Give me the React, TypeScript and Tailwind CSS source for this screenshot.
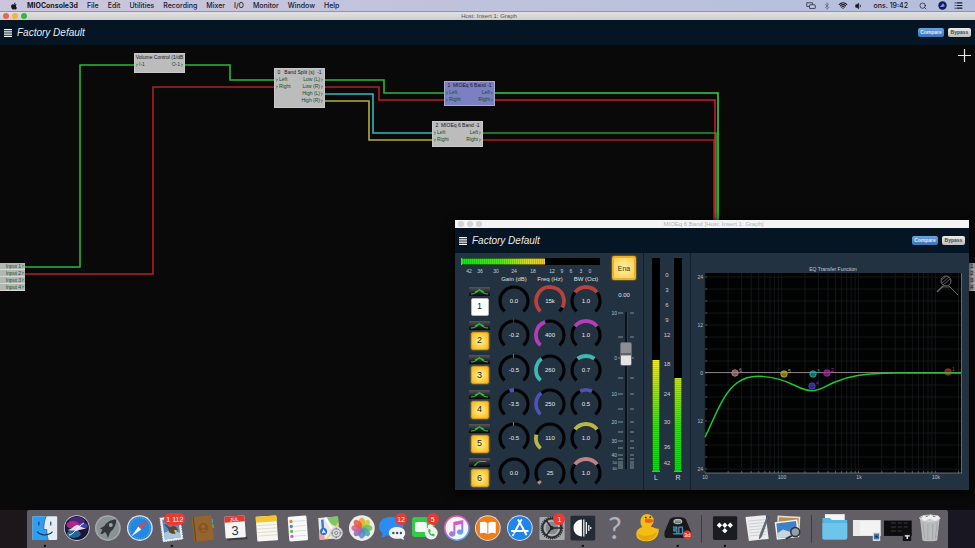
/**
 * @module App
 *
 * MIO Console desktop — insert graph window with an open 6 band EQ editor,
 * framed by the system menu bar and the dock.
 */

import { useState } from "react";
import type { ReactNode } from "react";
import { FaApple } from "react-icons/fa";
import { Bluetooth, ChevronRight, List, Search, Volume1, Wifi } from "lucide-react";

const MENUS = ["File", "Edit", "Utilities", "Recording", "Mixer", "I/O", "Monitor", "Window", "Help"];

/* ------------------------------------------------------------------ */
/* Menu bar                                                            */
/* ------------------------------------------------------------------ */

function MenuBar() {
  return (
    <header className="flex h-3 items-center justify-between border-b border-[#8f93a8] bg-linear-to-r from-[#cbc6dc] to-[#b3bedd] pr-3 pl-[10px] font-[Inter,sans-serif] text-[7px] leading-none font-medium text-[#17171f]">
      <nav className="flex items-center gap-[9px]">
        <button aria-label="Apple menu">
          <FaApple className="h-2 w-2" />
        </button>
        <button className="font-bold">MIOConsole3d</button>
        {MENUS.map((m) => (
          <button key={m}>{m}</button>
        ))}
      </nav>
      <div className="flex items-center gap-[7px]">
        <svg viewBox="0 0 20 14" className="h-[7px] w-[10px]" fill="none" stroke="#2b2d3c" strokeWidth="1.6">
          <path d="M6 9H1.5V1.5H13V5" />
          <rect x="7" y="5.5" width="11.5" height="7.5" rx="1" />
        </svg>
        <Bluetooth className="h-2 w-2 text-[#5a5f78]" />
        <Wifi className="h-[9px] w-[10px]" strokeWidth={3} />
        <Volume1 className="h-2 w-2 fill-current" />
        <span className="pr-1 pl-1">ons. 19:42</span>
        <button aria-label="Search" className="pr-1">
          <Search className="h-2 w-2" />
        </button>
        <button aria-label="Siri">
          <svg viewBox="0 0 16 16" className="h-[9px] w-[9px]">
            <circle cx="8" cy="8" r="7.5" fill="#151a5c" />
            <path d="M3 10c3-1 4-5 6-6 2 1 1 4 4 5-3 1-6 3-10 1z" fill="#7d8cf0" />
          </svg>
        </button>
        <button aria-label="Notifications">
          <List className="h-[9px] w-[9px]" strokeWidth={3} />
        </button>
      </div>
    </header>
  );
}

/* ------------------------------------------------------------------ */
/* Window chrome                                                       */
/* ------------------------------------------------------------------ */

function TitleBar({ title, active }: { title: string; active?: boolean }) {
  return (
    <div
      className={
        active
          ? "flex h-2 items-center bg-linear-to-b from-[#e2e1e2] to-[#cfcecf] text-[#555]"
          : "flex h-2 items-center bg-[#f4f4f4] text-[#b5b5b5]"
      }
    >
      <div className="flex flex-1 gap-[3px] pl-[3px]">
        <button aria-label="Close" className={active ? "h-1.5 w-1.5 rounded-full bg-[#f0605a]" : "h-1.5 w-1.5 rounded-full bg-[#d3d3d3]"} />
        <button aria-label="Minimize" className={active ? "h-1.5 w-1.5 rounded-full bg-[#f0b53c]" : "h-1.5 w-1.5 rounded-full bg-[#d3d3d3]"} />
        <button aria-label="Zoom" className={active ? "h-1.5 w-1.5 rounded-full bg-[#38b54a]" : "h-1.5 w-1.5 rounded-full bg-[#d3d3d3]"} />
      </div>
      <span className="text-[6px] leading-none">{title}</span>
      <div className="flex-1" />
    </div>
  );
}

function PresetBar() {
  return (
    <div className="flex h-[25px] items-center justify-between bg-[#051523] pr-1 pl-1">
      <div className="flex items-center gap-[5px]">
        <button aria-label="Preset menu">
          <svg viewBox="0 0 8 8" className="h-2 w-2" stroke="#fff" strokeWidth="1.200">
            <path d="M0 0.700H8M0 2.900H8M0 5.100H8M0 7.300H8" />
          </svg>
        </button>
        <span className="text-[10px] leading-none text-[#e8ecef] italic">Factory Default</span>
      </div>
      <div className="flex gap-1 text-[5px] leading-none font-bold">
        <button className="h-[9px] w-[26px] rounded-xs bg-linear-to-b from-[#6aa5de] to-[#3873b8] text-[#dcebfa]">Compare</button>
        <button className="h-[9px] w-[23px] rounded-xs bg-linear-to-b from-[#ececec] to-[#bdbdbd] text-[#444]">Bypass</button>
      </div>
    </div>
  );
}

/* ------------------------------------------------------------------ */
/* Graph nodes and wires                                               */
/* ------------------------------------------------------------------ */

const WIRES: { color: string; d: string }[] = [
  { color: "#2eb53a", d: "M25 222H80V20H134" },
  { color: "#2eb53a", d: "M185 20H230V35H274" },
  { color: "#b31f24", d: "M25 229H153V42H274" },
  { color: "#35b8bf", d: "M325 49H373V88H432" },
  { color: "#b8ac3c", d: "M325 56H369V95H432" },
  { color: "#b31f24", d: "M325 42H379V55H444" },
  { color: "#2eb53a", d: "M325 35H384V48H444" },
  { color: "#a32020", d: "M482 95H714V229H969" },
  { color: "#c91f22", d: "M495 55H715V229H969" },
  { color: "#2a962c", d: "M482 88H716V222H969" },
  { color: "#35d040", d: "M495 48H718V222H969" },
];

type Port = { left?: string; right?: string };

function GraphNode({ title, ports, className }: { title: string; ports: Port[]; className: string }) {
  return (
    <div className={`absolute w-[51px] overflow-hidden border border-[#d4d4d4]/50 text-[5px] ${className}`}>
      <div className="flex h-[7px] items-center justify-center leading-none whitespace-pre text-[#16161c]">{title}</div>
      {ports.map((p, i) => (
        <div key={i} className="flex h-[7px] items-center justify-between leading-none text-[#14501e]">
          <span className="flex items-center">
            {p.left && <ChevronRight className="h-1 w-1" strokeWidth={4} />}
            {p.left}
          </span>
          <span className="flex items-center">
            {p.right}
            {p.right && <ChevronRight className="h-1 w-1" strokeWidth={4} />}
          </span>
        </div>
      ))}
    </div>
  );
}

const STEREO: Port[] = [
  { left: "Left", right: "Left" },
  { left: "Right", right: "Right" },
];

/* ------------------------------------------------------------------ */
/* EQ controls                                                         */
/* ------------------------------------------------------------------ */

type Band = {
  id: number;
  on: boolean;
  shape: "bell" | "cut";
  color: string;
  gain: string;
  gainArc?: [number, number];
  freq: string;
  freqEnd: number;
  bw: string;
  bwHalf: number;
};

const BANDS: Band[] = [
  { id: 1, on: false, shape: "bell", color: "#b8423f", gain: "0.0", freq: "15k", freqEnd: 118, bw: "1.0", bwHalf: 52 },
  { id: 2, on: true, shape: "bell", color: "#b23fb8", gain: "-0.2", gainArc: [-2, 0], freq: "400", freqEnd: -20, bw: "1.0", bwHalf: 52 },
  { id: 3, on: true, shape: "bell", color: "#3fb8b4", gain: "-0.5", gainArc: [-4, 0], freq: "260", freqEnd: -36, bw: "0.7", bwHalf: 37 },
  { id: 4, on: true, shape: "bell", color: "#5052b8", gain: "-3.5", gainArc: [-18, 0], freq: "250", freqEnd: -38, bw: "0.5", bwHalf: 25 },
  { id: 5, on: true, shape: "bell", color: "#b8b84a", gain: "-0.5", gainArc: [-4, 0], freq: "110", freqEnd: -76, bw: "1.0", bwHalf: 52 },
  { id: 6, on: true, shape: "cut", color: "#bf8286", gain: "0.0", freq: "25", freqEnd: -125, bw: "1.0", bwHalf: 52 },
];

function arc(from: number, to: number) {
  const r = 14;
  const pt = (deg: number) => {
    const a = (deg * Math.PI) / 180;
    return `${(16 + r * Math.sin(a)).toFixed(2)} ${(16 - r * Math.cos(a)).toFixed(2)}`;
  };
  return `M${pt(from)}A${r} ${r} 0 ${to - from > 180 ? 1 : 0} 1 ${pt(to)}`;
}

function Knob({ label, value, range, color }: { label: string; value: string; range?: [number, number]; color: string }) {
  return (
    <div className="relative flex h-8 w-8 items-center justify-center justify-self-center">
      <svg viewBox="0 0 32 32" className="absolute inset-0" fill="none" strokeWidth="3.200">
        <path d={arc(-138, 138)} stroke="#020203" />
        {range && <path d={arc(range[0], range[1])} stroke={color} strokeWidth="3.800" />}
      </svg>
      <span className="text-[6px] leading-none text-[#e6eaed]">{value}</span>
      <input type="range" aria-label={label} min={-135} max={135} defaultValue={range ? range[1] : 0} className="absolute inset-0 h-8 w-8 opacity-0" />
    </div>
  );
}

function BandRow({ band }: { band: Band }) {
  const [on, setOn] = useState(band.on);
  return (
    <div className="grid flex-1 grid-cols-[33px_36px_36px_36px] items-center">
      <div className="flex flex-col items-center gap-0.5">
        <button aria-label={`Band ${band.id} filter type`} className="bg-linear-to-b from-[#55585b] to-[#08090a]">
          <svg viewBox="0 0 21 9" className="h-[9px] w-[21px]" fill="none" stroke="#27c23c" strokeWidth="1.200">
            {band.shape === "bell" ? (
              <path d="M2 7C6 7 8.500 5 10.500 2.500C12.500 5 15 7 19 7M6 5L10.500 3L15 5" />
            ) : (
              <path d="M5 7.500C8 7 7 4 11 3.500H17" />
            )}
          </svg>
        </button>
        <button
          onClick={() => setOn(!on)}
          aria-pressed={on}
          className={
            on
              ? "flex h-[18px] w-[18px] items-center justify-center rounded-xs border border-[#dc9c18] bg-radial from-[#fff0a0] via-[#fdd64e] to-[#f3b31c] text-[9px] leading-none text-[#26241c] shadow-[0_0_2px_#e8a818]"
              : "flex h-[18px] w-[18px] items-center justify-center rounded-xs border border-[#b5b8ba] bg-white text-[9px] leading-none text-[#26241c]"
          }
        >
          {band.id}
        </button>
      </div>
      <Knob label={`Band ${band.id} gain`} value={band.gain} range={band.gainArc} color={band.id === 4 ? band.color : "#6f7a72"} />
      <Knob label={`Band ${band.id} frequency`} value={band.freq} range={[-138, band.freqEnd]} color={band.color} />
      <Knob label={`Band ${band.id} bandwidth`} value={band.bw} range={[-band.bwHalf, band.bwHalf]} color={band.color} />
    </div>
  );
}

const INPUT_SCALE: [string, number][] = [
  ["42", 8], ["36", 19], ["30", 35], ["24", 53], ["18", 72], ["12", 91], ["9", 101], ["6", 110], ["3", 120], ["0", 129],
];

function InputMeter() {
  return (
    <svg viewBox="0 0 140 16" className="ml-1.5 h-4 w-[140px]">
      <defs>
        <linearGradient id="inputLevel">
          <stop offset="0" stopColor="#17e01c" />
          <stop offset="0.450" stopColor="#4be61a" />
          <stop offset="0.800" stopColor="#d5dc22" />
          <stop offset="1" stopColor="#f2c828" />
        </linearGradient>
        <pattern id="inputSegments" width="2" height="7" patternUnits="userSpaceOnUse">
          <rect width="0.500" height="7" fill="#000" opacity="0.250" />
        </pattern>
      </defs>
      <rect width="139" height="7" fill="#000" />
      <rect x="1" y="0.500" width="83" height="6" fill="url(#inputLevel)" />
      <rect x="1" y="0.500" width="83" height="6" fill="url(#inputSegments)" />
      <path d="M0.500 0V7" stroke="#c9a227" />
      <g fill="#c9d1d6" fontSize="5" textAnchor="middle">
        {INPUT_SCALE.map(([label, x]) => (
          <text key={label} x={x} y="15">{label}</text>
        ))}
      </g>
    </svg>
  );
}

const FADER_LABELS: [string, number][] = [
  ["10", 5], ["0", 50], ["10", 86], ["20", 114], ["30", 133], ["40", 147],
];
const FADER_LOW_LABELS: [string, number][] = [["50", 154], ["60", 160]];
const FADER_TICKS = [5, 29, 50, 70, 86, 101, 114, 124, 133, 140, 147, 151, 154, 156, 158, 160];

function Fader() {
  const [value, setValue] = useState(72);
  return (
    <div className="relative h-[164px] w-[38px]">
      <svg viewBox="0 0 38 164" className="absolute inset-0" fill="none">
        <rect x="20" y="4" width="2" height="157" fill="#0b1218" />
        <path d="M22.500 4V161" stroke="#3b4c59" strokeWidth="0.600" />
        {FADER_TICKS.map((y) => (
          <path key={y} d={`M13 ${y}h5M25 ${y}h4`} stroke="#9ba7af" strokeWidth="0.800" />
        ))}
        <g fill="#b7c1c8" fontSize="5" textAnchor="end">
          {FADER_LABELS.map(([label, y]) => (
            <text key={y} x="12" y={y + 2}>{label}</text>
          ))}
        </g>
        <g fill="#b7c1c8" fontSize="4" textAnchor="end">
          {FADER_LOW_LABELS.map(([label, y]) => (
            <text key={y} x="12" y={y + 2}>{label}</text>
          ))}
        </g>
      </svg>
      <div
        className="absolute left-[15px] h-6 w-3 rounded-xs border border-[#63666a] bg-linear-to-b from-[#8d8f92] from-45% via-[#3e4043] via-50% to-[#e4e5e6] to-60%"
        style={{ top: `${((100 - value) / 100) * 122}px` }}
      />
      <input
        type="range"
        aria-label="Output level"
        value={value}
        onChange={(e) => setValue(Number(e.target.value))}
        className="absolute inset-y-0 left-[13px] h-full w-4 opacity-0 [direction:rtl] [writing-mode:vertical-lr]"
      />
    </div>
  );
}

const OUTPUT_SCALE: [string, number][] = [
  ["0", 22], ["3", 37], ["6", 52], ["9", 67], ["12", 82], ["18", 111], ["24", 141], ["30", 169], ["36", 194], ["42", 210],
];

function OutputMeters() {
  return (
    <svg viewBox="0 0 46 237" className="w-[46px]">
      <defs>
        <linearGradient id="outputLevel" gradientUnits="userSpaceOnUse" x1="0" y1="107" x2="0" y2="218">
          <stop offset="0" stopColor="#f6ee22" />
          <stop offset="0.250" stopColor="#a8e022" />
          <stop offset="0.600" stopColor="#35dc1c" />
          <stop offset="1" stopColor="#0cd416" />
        </linearGradient>
        <pattern id="outputSegments" width="7" height="2" patternUnits="userSpaceOnUse">
          <rect width="7" height="0.500" fill="#000" opacity="0.250" />
        </pattern>
      </defs>
      {[{ x: 8, top: 107, name: "L" }, { x: 30, top: 125, name: "R" }].map((m) => (
        <g key={m.name}>
          <rect x={m.x} y="5" width="8" height="214" fill="#000" />
          <rect x={m.x + 0.5} y={m.top} width="7" height={218 - m.top} fill="url(#outputLevel)" />
          <rect x={m.x + 0.5} y={m.top} width="7" height={218 - m.top} fill="url(#outputSegments)" />
          <path d={`M${m.x} 218.500h8`} stroke="#c48a20" />
          <text x={m.x + 4} y="227" fontSize="7" fill="#d7dde1" textAnchor="middle">{m.name}</text>
        </g>
      ))}
      <g fill="#c6cfd5" fontSize="6" textAnchor="middle">
        {OUTPUT_SCALE.map(([label, y]) => (
          <text key={label} x="23" y={y + 2}>{label}</text>
        ))}
      </g>
    </svg>
  );
}

/* ------------------------------------------------------------------ */
/* Transfer function plot                                              */
/* ------------------------------------------------------------------ */

const HANDLES = [
  { id: 6, x: 44, y: 120, color: "#bf8286" },
  { id: 5, x: 93, y: 121, color: "#b8b022" },
  { id: 3, x: 122, y: 121, color: "#23a8a8" },
  { id: 2, x: 136, y: 120, color: "#b022b0" },
  { id: 4, x: 121, y: 133, color: "#4545c4" },
  { id: 1, x: 257, y: 119, color: "#b8321f" },
];

const freqToX = (f: number) => 14 + 76.8 * Math.log10(f / 10);
const GRID_FREQS = [10, 100, 1000, 10000].flatMap((d) => [1, 2, 3, 4, 5, 6, 7, 8, 9].map((n) => n * d)).filter((f) => f <= 20000);
const GRID_LINES = Array.from({ length: 17 }, (_, i) => 24 + i * 12);

function TransferPlot() {
  return (
    <svg viewBox="0 0 278 237" className="w-[278px]" fill="none">
      <text x="142" y="18" fontSize="5" fill="#c3ccd2" textAnchor="middle">EQ Transfer Function</text>
      <rect x="14" y="20" width="257" height="200" fill="#010202" />
      {GRID_LINES.map((y) => (
        <path key={y} d={`M15 ${y}H270`} stroke="#1b1f21" strokeWidth="0.700" />
      ))}
      {GRID_FREQS.map((f) => (
        <path key={f} d={`M${freqToX(f).toFixed(1)} 20V220`} stroke="#1b1f21" strokeWidth="0.700" />
      ))}
      {GRID_FREQS.map((f) => (
        <path key={f} d={`M${freqToX(f).toFixed(1)} 220v-2`} stroke="#76838b" strokeWidth="0.600" />
      ))}
      {GRID_LINES.map((y) => (
        <path key={y} d={`M14 ${y}h2`} stroke="#76838b" strokeWidth="0.600" />
      ))}
      <path d="M14 220H271M270.500 20V220" stroke="#7c878d" strokeWidth="0.800" />
      <path d="M14 119.500H270" stroke="#a39a9a" strokeWidth="0.800" />
      {HANDLES.map((h) => (
        <g key={h.id}>
          <circle cx={h.x} cy={h.y} r="3.200" fill={h.color} fillOpacity="0.650" stroke={h.color} strokeWidth="0.900" />
          <text x={h.x + 4} y={h.y - 1} fontSize="5" fill={h.color}>{h.id}</text>
        </g>
      ))}
      <path
        d="M14 184.300C20 172 27 154 34 143.500C41 132.500 50 123.500 67 123.300C84 123.300 96 128.500 104 132.500C111 136 116 137.700 121 137.700C130 137.700 134 133 144 129C158 123 170 120.500 206 120H270"
        stroke="#1fc92c"
        strokeWidth="1.400"
      />
      <g stroke="#6c6f70" strokeWidth="1">
        <circle cx="255" cy="28" r="5" />
        <path d="M251 30L258 24M252 32L259 26M250.500 27L255 23.500" strokeWidth="0.800" />
        <path d="M252 33L246 39" strokeWidth="1.500" />
        <path d="M258 33L267 42" />
        <path d="M251 34H259" strokeWidth="0.800" />
      </g>
      <g fill="#b7c1c8" fontSize="5">
        {["24", "12", "0", "12", "24"].map((t, i) => (
          <text key={i} x="12" y={26 + i * 48} textAnchor="end">{t}</text>
        ))}
        {["10", "100", "1k", "10k"].map((t, i) => (
          <text key={t} x={14 + i * 77} y="226" textAnchor="middle">{t}</text>
        ))}
      </g>
    </svg>
  );
}

function EqWindow() {
  const [enabled, setEnabled] = useState(true);
  return (
    <section className="absolute top-[175px] left-[455px] shadow-[0_2px_10px_#000]">
      <TitleBar title="MIOEq 6 Band [Host: Insert 1: Graph]" />
      <PresetBar />
      <div className="flex bg-[#223240]">
        <div className="flex flex-col pt-[5px] pr-px">
          <InputMeter />
          <div className="grid grid-cols-[33px_36px_36px_36px] pl-2 text-center text-[6px] leading-[10px] whitespace-nowrap text-[#dbe1e5]">
            <span />
            <span>Gain (dB)</span>
            <span>Freq (Hz)</span>
            <span>BW (Oct)</span>
          </div>
          <div className="flex flex-1 flex-col pl-2">
            {BANDS.map((b) => (
              <BandRow key={b.id} band={b} />
            ))}
          </div>
        </div>
        <div className="flex w-[38px] flex-col items-center pt-[3px]">
          <button
            onClick={() => setEnabled(!enabled)}
            aria-pressed={enabled}
            className={
              enabled
                ? "h-6 w-6 rounded-xs border-2 border-[#eeb02a] bg-radial from-[#fff0a0] to-[#f9cf4a] text-[7px] leading-none text-[#3b3413] shadow-[0_0_2px_#e8a818]"
                : "h-6 w-6 rounded-xs border-2 border-[#b5b8ba] bg-white text-[7px] leading-none text-[#3b3413]"
            }
          >
            Ena
          </button>
          <output className="pt-3 pb-2.5 text-[6px] leading-none text-[#dbe1e5]">0.00</output>
          <Fader />
        </div>
        <div className="border-x border-[#131f2a]">
          <OutputMeters />
        </div>
        <TransferPlot />
      </div>
    </section>
  );
}

function Canvas() {
  return (
    <main className="relative min-h-[464px] flex-1 overflow-hidden bg-[#090909]">
      <svg className="absolute inset-0 h-full w-full" fill="none" strokeWidth="1.600">
        {WIRES.map((w) => (
          <path key={w.d} d={w.d} stroke={w.color} />
        ))}
      </svg>

      <button aria-label="Add node" className="absolute top-1 right-1">
        <svg viewBox="0 0 13 13" className="h-[13px] w-[13px]" stroke="#e8e8e8" strokeWidth="1.200">
          <path d="M0 6.500H13M6.500 0V13" />
        </svg>
      </button>

      <GraphNode title="Volume Control (1/dB" ports={[{ left: "I-1", right: "O-1" }]} className="top-2 left-[134px] h-5 bg-[#bcbcbc]" />
      <GraphNode
        title="0   Band Split (s)  -1"
        ports={[{ left: "Left", right: "Low (L)" }, { left: "Right", right: "Low (R)" }, { right: "High (L)" }, { right: "High (R)" }]}
        className="top-[23px] left-[274px] h-10 bg-[#bcbcbc]"
      />
      <GraphNode title="1  MIOEq 6 Band -1" ports={STEREO} className="top-9 left-[444px] h-[25px] bg-[#7b80c2]" />
      <GraphNode title="2  MIOEq 6 Band -1" ports={STEREO} className="top-[76px] left-[432px] h-[26px] bg-[#bcbcbc]" />

      <ul className="absolute top-[218px] left-0 w-[25px] text-[5px] text-[#14501e]">
        {[1, 2, 3, 4].map((n) => (
          <li key={n} className="flex h-[7px] items-center justify-end border-b border-[#d8d8d8] bg-[#b4b8b4] leading-none">
            Input {n}
            <ChevronRight className="h-1 w-1" strokeWidth={4} />
          </li>
        ))}
      </ul>
      <ul className="absolute top-[218px] right-0 w-1.5 text-center text-[5px] text-[#222]">
        {[1, 2, 3, 4].map((n) => (
          <li key={n} className="h-[7px] border-b border-[#d8d8d8] bg-[#b4b4b4] leading-[6px]">{n}</li>
        ))}
      </ul>

      <EqWindow />
    </main>
  );
}

/* ------------------------------------------------------------------ */
/* Dock                                                                */
/* ------------------------------------------------------------------ */

type DockItem = { name: string; art: ReactNode; badge?: string; running?: boolean };

const APPS: DockItem[] = [
  {
    name: "Finder",
    running: true,
    art: (
      <>
        <rect x="3.500" y="6" width="25" height="24" rx="1" fill="#e3ebf3" />
        <path d="M4.500 6H17.500C15.500 11 15 15 15 19.500H18C18 24 18.500 27 19.500 30H4.500Q3.500 30 3.500 29V7Q3.500 6 4.500 6Z" fill="#2f9df0" />
        <path d="M10 12v3M22 12v3M8.500 22C12 26 20 26 23.500 22" fill="none" stroke="#13324f" strokeWidth="1.100" strokeLinecap="round" />
        <path d="M17.500 6C15.500 11 15 15 15 19.500H18C18 24 18.500 27 19.500 30" fill="none" stroke="#13324f" strokeWidth="0.500" />
      </>
    ),
  },
  {
    name: "Siri",
    art: (
      <>
        <circle cx="16" cy="18" r="13" fill="#cfd0d8" />
        <circle cx="16" cy="18" r="12.200" fill="#1c1535" />
        <ellipse cx="16" cy="11" rx="8" ry="4.500" fill="#4a2478" />
        <ellipse cx="12" cy="15" rx="6.500" ry="4" fill="#c02a8e" opacity="0.850" />
        <ellipse cx="22" cy="16" rx="5" ry="3" fill="#4654c8" opacity="0.800" />
        <ellipse cx="13" cy="24" rx="7" ry="4" fill="#207fae" opacity="0.800" />
        <path d="M6 20C11 20 14 14 17 15C20 16 22 19 26 18C22 20 19 19 16 21C13 20 10 21 6 20Z" fill="#e7d8f8" />
        <path d="M8 25C13 25 16 17 23 13" stroke="#fff" strokeWidth="1" fill="none" />
      </>
    ),
  },
  {
    name: "Launchpad",
    art: (
      <>
        <circle cx="16" cy="18" r="13" fill="#a4aaac" />
        <circle cx="16" cy="18" r="11.500" fill="#8b9295" />
        <path d="M24.500 9.500C19 9.500 15 12 12.500 16L8 18.500L10.500 19.500L8.500 24L10.500 24L13 22L14.500 23.500L16 28L18.500 22C22.500 19 24.500 15 24.500 9.500Z" fill="#34383b" />
        <circle cx="19" cy="15" r="2" fill="#9ba1a4" />
      </>
    ),
  },
  {
    name: "Safari",
    art: (
      <>
        <circle cx="16" cy="18" r="13" fill="#dfe4e8" />
        <circle cx="16" cy="18" r="11.700" fill="#2387df" />
        <circle cx="16" cy="18" r="10.300" fill="none" stroke="#b5dbf8" strokeWidth="1" strokeDasharray="0.400 1.400" />
        <path d="M24.500 9.500L17.500 19.500L14.500 16.500Z" fill="#e8423a" />
        <path d="M7.500 26.500L14.500 16.500L17.500 19.500Z" fill="#f4f4f4" />
      </>
    ),
  },
  {
    name: "Mail",
    badge: "1 112",
    running: true,
    art: (
      <g transform="rotate(-8 16 18)">
        <rect x="5.500" y="6.500" width="20" height="24" fill="#eceeee" stroke="#eceeee" strokeWidth="1" strokeDasharray="1.500 1" />
        <rect x="7.500" y="8.500" width="16" height="20" fill="#4f8ac4" />
        <path d="M7.500 22L14 20L23.500 24V28.500H7.500Z" fill="#a9c6dc" />
        <path d="M9 13C12 14 13 16 14.500 17L18 16C20 16.500 21 19 22 21L18.500 21.500L19 24C16 24.500 14 23 12.500 21.500C13 18 10 16 9 13Z" fill="#5c4632" />
        <path d="M18 20L21 21.500L18.500 23Z" fill="#e8c46a" />
      </g>
    ),
  },
  {
    name: "Contacts",
    art: (
      <g transform="rotate(-6 16 18)">
        <path d="M25 10h2v4h-2z" fill="#4aa5c9" />
        <path d="M25 15h2v4h-2z" fill="#77b64a" />
        <rect x="6" y="6" width="20" height="25" rx="1.500" fill="#94642e" />
        <path d="M7.500 6V31" stroke="#6f4719" strokeWidth="1.200" />
        <circle cx="16.500" cy="18" r="5" fill="#855522" />
        <circle cx="16.500" cy="16.500" r="2" fill="#96672f" />
        <path d="M13 21.500Q16.500 17.500 20 21.500Z" fill="#96672f" />
      </g>
    ),
  },
  {
    name: "Calendar",
    art: (
      <g transform="rotate(-4 16 18)">
        <path d="M7 27L27 27L28.500 30H8Z" fill="#3d3a40" />
        <rect x="6" y="6" width="20.500" height="22" rx="1" fill="#f6f6f6" />
        <path d="M6 12V7Q6 6 7 6H25.500Q26.500 6 26.500 7V12Z" fill="#de3b35" />
        <text x="16" y="11" fontSize="5" fill="#fff" textAnchor="middle">JUL</text>
        <text x="16" y="25" fontSize="13" fill="#2d2d2f" textAnchor="middle">3</text>
      </g>
    ),
  },
  {
    name: "Notes",
    art: (
      <g transform="rotate(-4 16 18)">
        <rect x="5.500" y="6" width="21" height="25" rx="1" fill="#f8f7f0" />
        <path d="M5.500 12V7Q5.500 6 6.500 6H25.500Q26.500 6 26.500 7V12Z" fill="#f3c62f" />
        <path d="M6 15H26M6 18.500H26M6 22H26M6 25.500H26" stroke="#d5d2c4" strokeWidth="0.700" />
      </g>
    ),
  },
  {
    name: "Reminders",
    art: (
      <g transform="rotate(-4 16 18)">
        <rect x="6.500" y="6" width="19" height="25" rx="1.500" fill="#f9f9f9" />
        <path d="M12 11H24M12 16H24M12 21H24M12 26H24" stroke="#cfcfd2" strokeWidth="0.700" />
        <circle cx="9.500" cy="11" r="1.700" fill="#e8872d" />
        <circle cx="9.500" cy="16" r="1.700" fill="#3d8fe0" />
        <circle cx="9.500" cy="21" r="1.700" fill="#64bd4c" />
        <circle cx="9.500" cy="26" r="1.700" fill="#b866d6" />
      </g>
    ),
  },
  {
    name: "Maps",
    art: (
      <>
        <g transform="rotate(-4 16 18)">
          <rect x="5" y="7" width="20" height="22" fill="#ece9df" />
          <path d="M14 7H25V17C20 17 16 14 14 7Z" fill="#7fc763" />
          <path d="M5 20L10 17V29H5Z" fill="#f0a5a0" />
          <path d="M12 7L21 25" stroke="#fff" strokeWidth="2" />
          <path d="M25 14L12 29" stroke="#f6d25c" strokeWidth="1.500" />
          <path d="M9 9V20" stroke="#2f7fe0" strokeWidth="2.500" />
          <circle cx="9.500" cy="21" r="3.500" fill="#2673dd" />
          <path d="M9.500 18.500L11.500 23L9.500 22L7.500 23Z" fill="#fff" />
        </g>
        <circle cx="22.500" cy="23" r="6.500" fill="#d8dadd" />
        <circle cx="22.500" cy="23" r="4.300" fill="none" stroke="#75797f" strokeWidth="0.800" />
        <circle cx="22.500" cy="23" r="1.600" fill="none" stroke="#75797f" strokeWidth="0.800" />
        <path d="M22.500 17.500V20M22.500 26V28.500M17 23H19.500M25.500 23H28" stroke="#75797f" strokeWidth="0.700" />
      </>
    ),
  },
  {
    name: "Photos",
    art: (
      <>
        <circle cx="16" cy="18" r="13" fill="#ededee" />
        {["#f0a127", "#c7cb35", "#6fbd55", "#3fa79b", "#5387cc", "#8d68b5", "#cc6091", "#e9583b"].map((c, i) => (
          <ellipse key={c} cx="16" cy="12.500" rx="3.400" ry="5.200" fill={c} fillOpacity="0.850" transform={`rotate(${i * 45} 16 18)`} />
        ))}
      </>
    ),
  },
  {
    name: "Messages",
    badge: "12",
    art: (
      <>
        <path d="M14 6.500C21 6.500 26.500 10.500 26.500 16.500S21 26 14 26C12.500 26 11 25.800 9.500 25.300C8 26.800 6 27.500 4 27.500C5.200 26.300 5.700 25 5.500 23.300C3.500 21.500 2 19 2 16.500C2 10.500 7.500 6.500 14 6.500Z" fill="#2b8df0" />
        <path d="M20 17C25 17 28.500 19.300 28.500 23C28.500 25 27.500 26.500 26.500 27.300L27.500 30L24 28.600C18 29.800 12 27.500 12 23C12 19.300 15.500 17 20 17Z" fill="#f1f5f9" />
        <circle cx="16.500" cy="23" r="1.200" fill="#3f4a58" />
        <circle cx="20.300" cy="23" r="1.200" fill="#3f4a58" />
        <circle cx="24.100" cy="23" r="1.200" fill="#3f4a58" />
      </>
    ),
  },
  {
    name: "FaceTime",
    badge: "5",
    art: (
      <>
        <rect x="3" y="7" width="23" height="20" rx="3" fill="#35c94b" />
        <rect x="6" y="12" width="12" height="10" rx="2" fill="#f3f8f4" />
        <path d="M19 15.500L24 12.500V20L19 18.500Z" fill="#f3f8f4" />
        <circle cx="22.500" cy="23" r="6.500" fill="#eef2ef" />
        <path d="M19.500 19.500C19 23 22 26.500 25.500 26.300L26 24.500L24 23.500L23 24.300C22 23.800 21.500 23 21.300 22L22 21L21 19Z" fill="#36bf4c" />
      </>
    ),
  },
  {
    name: "iTunes",
    art: (
      <>
        <defs>
          <linearGradient id="itunes" x1="0" y1="0" x2="0.600" y2="1">
            <stop offset="0" stopColor="#f7527b" />
            <stop offset="0.550" stopColor="#c55fe0" />
            <stop offset="1" stopColor="#46b5f2" />
          </linearGradient>
        </defs>
        <circle cx="16" cy="18" r="13" fill="url(#itunes)" />
        <circle cx="16" cy="18" r="11.500" fill="#f7f5f9" />
        <path d="M12.500 12L22.500 9.800V22A3.200 2.600 0 1 1 20.500 19.700V14L14.500 15.300V24A3.200 2.600 0 1 1 12.500 21.700Z" fill="url(#itunes)" />
      </>
    ),
  },
  {
    name: "iBooks",
    art: (
      <>
        <circle cx="16" cy="18" r="13" fill="#e6dcd2" />
        <circle cx="16" cy="18" r="12" fill="#ee7d1c" />
        <path d="M15.500 13C13.500 11.300 10.500 11.300 8 12.300V23.500C10.500 22.500 13.500 22.700 15.500 24ZM16.500 13C18.500 11.300 21.500 11.300 24 12.300V23.500C21.500 22.500 18.500 22.700 16.500 24Z" fill="#fff" />
      </>
    ),
  },
  {
    name: "App Store",
    art: (
      <>
        <circle cx="16" cy="18" r="13" fill="#d5e0ea" />
        <circle cx="16" cy="18" r="12" fill="#1d86ee" />
        <path d="M14.500 10L22.500 24.500M17.500 10L10.500 22.500M8 21H18.500M21 21H24M9.500 24.500L9 25.300" stroke="#fff" strokeWidth="2" strokeLinecap="round" fill="none" />
      </>
    ),
  },
  {
    name: "System Preferences",
    badge: "1",
    art: (
      <>
        <rect x="3.500" y="7" width="25.500" height="23" rx="1" fill="#a6a9ad" />
        <circle cx="16" cy="18" r="9.500" fill="none" stroke="#2c2e31" strokeWidth="2" />
        <circle cx="16" cy="18" r="10.800" fill="none" stroke="#2c2e31" strokeWidth="1.500" strokeDasharray="1.200 1" />
        <circle cx="16" cy="18" r="7" fill="#85888c" stroke="#d0d2d4" strokeWidth="0.700" />
        <path d="M16 18L10 10M16 18H25M16 18L10 26" stroke="#222426" strokeWidth="1.500" />
        <circle cx="16" cy="18" r="2" fill="#222426" />
      </>
    ),
  },
  {
    name: "Audio",
    running: true,
    art: (
      <>
        <rect x="3.500" y="5.500" width="25" height="25" rx="1.500" fill="#222b36" />
        <path d="M15 9.500A8.500 8.500 0 0 0 15 26.500Z" fill="#fff" />
        <path d="M17 9.500V26.500M19.500 12V24M22 15V21M24 17V19" stroke="#fff" strokeWidth="1.200" />
      </>
    ),
  },
  {
    name: "Missing application",
    art: <text x="16" y="29" fontSize="31" fill="#b3b1b8" textAnchor="middle" fontFamily="Lato">?</text>,
  },
  {
    name: "Cyberduck",
    art: (
      <>
        <path d="M13 4.500C18 2.500 23.500 6 23 11C22.800 13.500 21 15 20 16.500C24 18 26.500 19.500 28 18.500C28.500 24 26 31 16 31.500C8 31.500 4.500 28 5.500 22.500C6 19.500 9 18 11.500 17C9 14.500 8.500 7 13 4.500Z" fill="#f4bd16" />
        <path d="M7 23C10 27 20 27 26 22C25 27 22 30 16 30.500C10 30.500 7 28 7 23Z" fill="#d9980c" opacity="0.600" />
        <path d="M14 9.500C16 8 21 8.500 23.500 10.500C22 13 17 14 14 12Z" fill="#e5661b" />
        <circle cx="15" cy="7.500" r="1" fill="#333" />
        <circle cx="19.500" cy="7" r="1" fill="#333" />
      </>
    ),
  },
  {
    name: "MIO Console 3d",
    running: true,
    art: (
      <>
        <path d="M8 9C10 6 22 6 24 9L29.500 22V26Q29.500 28 27 28H5Q2.500 28 2.500 26V22Z" fill="#17191b" />
        <ellipse cx="16" cy="11.500" rx="4.500" ry="2.800" fill="#b5babd" />
        <path d="M13 11H19M13 12.500H19" stroke="#333" strokeWidth="0.600" />
        <path d="M11 17H15V19H12V21H15V24M17 17V24M17 17H20.500L21 24M11 24H21" stroke="#4b93b5" strokeWidth="1.300" fill="none" />
        <circle cx="25.500" cy="25" r="4.500" fill="#e0342c" />
        <text x="25.500" y="27" fontSize="6" fill="#fff" textAnchor="middle">3d</text>
      </>
    ),
  },
];

const RECENT: DockItem[] = [
  {
    name: "TIDAL",
    running: true,
    art: (
      <>
        <rect x="4" y="6" width="24.500" height="24" rx="1.500" fill="#1b1c1f" />
        <path d="M10.500 12.500l2.700 2.700l-2.700 2.700l-2.700-2.700zM16 12.500l2.700 2.700l-2.700 2.700l-2.700-2.700zM21.500 12.500l2.700 2.700l-2.700 2.700l-2.700-2.700zM16 18l2.700 2.700l-2.700 2.700l-2.700-2.700z" fill="#fff" />
      </>
    ),
  },
  {
    name: "TextEdit",
    art: (
      <>
        <path d="M4.500 7L25 5L28 29L8 31Z" fill="#ecedee" />
        <path d="M7 11L24 9.500M7.300 14L24.300 12.500M7.600 17L24.600 15.500M8 20L25 18.500M8.400 23L25.400 21.500M8.800 26L25.800 24.500" stroke="#b9bcc0" strokeWidth="0.600" />
        <path d="M26.500 6L28 7L20.500 27L18.500 29L18.800 26Z" fill="#67747c" stroke="#31414b" strokeWidth="0.500" />
      </>
    ),
  },
  {
    name: "Preview",
    art: (
      <>
        <g transform="rotate(3 16 18)">
          <rect x="5" y="6" width="23" height="18" fill="#e6ddcc" />
          <rect x="6.500" y="7.500" width="20" height="15" fill="#bb8e4c" />
        </g>
        <g transform="rotate(-7 16 18)">
          <rect x="3.500" y="10.500" width="23" height="18" fill="#f2f3f4" />
          <rect x="5" y="12" width="20" height="15" fill="#3f80cb" />
          <path d="M5 22L11 19L17 22L25 18V27H5Z" fill="#c6d7df" />
        </g>
        <circle cx="23.500" cy="22" r="4.500" fill="#6f7d87" fillOpacity="0.600" stroke="#31363a" strokeWidth="1.600" />
        <path d="M20 26L14 29" stroke="#31363a" strokeWidth="2" />
      </>
    ),
  },
];

const FILES: DockItem[] = [
  {
    name: "Documents",
    art: (
      <>
        <path d="M6 4H26V14H6Z" fill="#f3f5f6" />
        <path d="M3.500 8H11L13 10H28.500V28Q28.500 29.500 27 29.500H5Q3.500 29.500 3.500 28Z" fill="#58b4e0" />
        <path d="M3.500 13H28.500V28Q28.500 29.500 27 29.500H5Q3.500 29.500 3.500 28Z" fill="#6ec5ec" />
      </>
    ),
  },
  {
    name: "Mail window",
    art: (
      <>
        <rect x="2" y="10" width="28" height="16" fill="#f3f3f3" />
        <path d="M2 10H9V26H2Z" fill="#e9eaeb" />
        <rect x="22" y="22" width="7.500" height="9" fill="#e8eaec" />
        <rect x="23" y="23.500" width="5.500" height="6" fill="#3e79b5" />
        <path d="M23.500 27L26 25L28 28Z" fill="#27374a" />
      </>
    ),
  },
  {
    name: "TIDAL window",
    art: (
      <>
        <rect x="2" y="10.500" width="28" height="15.500" fill="#0c0c0d" />
        <path d="M9 13H14M16 13H20M22 13H26M9 17H14M16 17H20M22 17H26M9 21H14M16 21H20" stroke="#232325" strokeWidth="2" />
        <rect x="21" y="23" width="8.500" height="8" rx="0.500" fill="#131315" />
        <path d="M23 26H28M25.500 26V29" stroke="#fff" strokeWidth="1.300" />
      </>
    ),
  },
  {
    name: "Trash",
    art: (
      <>
        <path d="M6 8L8.500 30Q9 31.500 16 31.500T23.500 30L26 8Z" fill="#c3c5c7" fillOpacity="0.900" />
        <path d="M9 13L11 29M14 14V30M19 14L18.500 30M23.500 13L21.500 29" stroke="#8f9296" strokeWidth="0.500" />
        <path d="M7 8L10 5L13 7L17 4L20 7L24 5L26 8L22 11L16 9L10 11Z" fill="#eeeff0" />
        <ellipse cx="16" cy="8" rx="10.300" ry="3" fill="none" stroke="#e2e4e5" strokeWidth="0.900" />
      </>
    ),
  },
];

function DockButton({ item }: { item: DockItem }) {
  return (
    <button aria-label={item.name} className="relative min-w-0 flex-1">
      <svg viewBox="0 0 32 38" className="h-[38px] w-full">
        {item.art}
        {item.running && <circle cx="16" cy="36" r="1.200" fill="#0a0a0a" />}
      </svg>
      {item.badge && (
        <span className="absolute top-[3px] right-0.5 flex h-3 min-w-3 items-center justify-center rounded-full bg-[#e93a35] px-0.5 text-[7px] leading-none whitespace-nowrap text-white">
          {item.badge}
        </span>
      )}
    </button>
  );
}

function DockDivider() {
  return (
    <div className="flex w-[15px] items-center justify-center">
      <span className="h-7 w-px bg-[#3e3c43]" />
    </div>
  );
}

function Dock() {
  return (
    <footer className="bg-linear-to-r from-[#1d171c] to-[#181722] px-[27px]">
      <div className="flex rounded-t-xs bg-[#625e66] px-0.5">
        {APPS.map((a) => (
          <DockButton key={a.name} item={a} />
        ))}
        <DockDivider />
        {RECENT.map((a) => (
          <DockButton key={a.name} item={a} />
        ))}
        <DockDivider />
        {FILES.map((a) => (
          <DockButton key={a.name} item={a} />
        ))}
      </div>
    </footer>
  );
}

export default function App() {
  return (
    <div className="flex min-h-screen flex-col bg-[#090909] font-['Liberation_Sans',Arial,sans-serif]">
      <MenuBar />
      <TitleBar title="Host: Insert 1: Graph" active />
      <PresetBar />
      <Canvas />
      <Dock />
    </div>
  );
}
